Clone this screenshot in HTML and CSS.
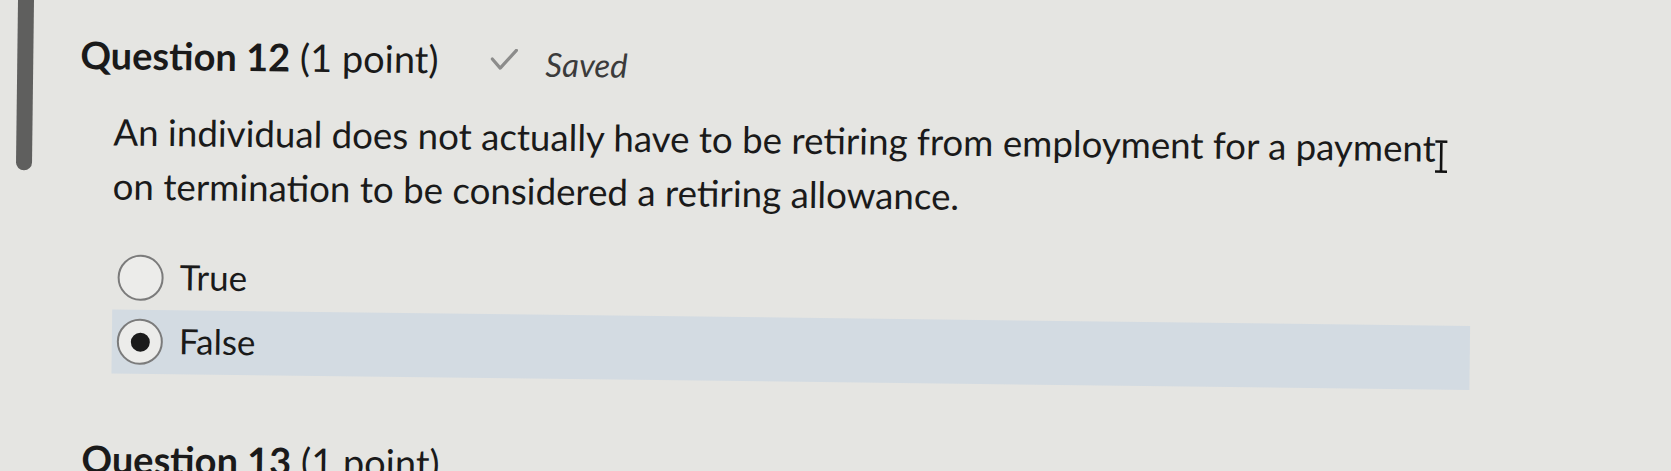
FILE: index.html
```html
<!DOCTYPE html>
<html lang="en">
<head>
  <meta charset="UTF-8" />
  <meta name="viewport" content="width=device-width, initial-scale=1" />
  <title>Quiz - Question 12</title>
  <link rel="stylesheet" href="styles.css">
</head>
<body>

  <div class="page">
    <div class="rail"></div>

    <div class="quiz">
      <div class="question">
        <div class="q-head">
          <h2><strong>Question 12</strong> (1 point)</h2>
          <span class="saved">
            <svg width="28" height="22" viewBox="0 0 28 22" aria-hidden="true">
              <path d="M2 11 L10 20 L26 2" fill="none" stroke="#8c8c8b" stroke-width="3.2" stroke-linecap="round" stroke-linejoin="round" />
            </svg>
            Saved
          </span>
        </div>

        <p class="q-text">An individual does not actually have to be retiring from employment for a payment<span class="caret"><svg width="16" height="34" viewBox="0 0 16 34" aria-hidden="true"><path d="M2 2 H14 M8 2 V32 M2 32 H14" fill="none" stroke="#111" stroke-width="2.6" /></svg></span> on termination to be considered a retiring allowance.</p>

        <div class="options">
          <label class="option">
            <span class="radio"></span>
            <span class="opt-text">True</span>
          </label>
          <label class="option selected">
            <span class="radio"></span>
            <span class="opt-text">False</span>
          </label>
        </div>
      </div>

      <div class="question next">
        <div class="q-head">
          <h2><strong>Question 13</strong> (1 point)</h2>
        </div>
      </div>
    </div>
  </div>

</body>
</html>
```

FILE: styles.css
```css
/* Base */
body {
  margin: 0;
  background: #e5e5e2;
  color: #1a1a1a;
  font-family: Lato, "Open Sans", sans-serif;
  overflow: hidden;
}

.page {
  display: flex;
  align-items: flex-start;
  transform: rotate(0.7deg);
  transform-origin: 0 0;
}

/* scroll marker on the left edge */
.rail {
  flex: none;
  width: 16px;
  height: 174px;
  margin-left: 18px;
  margin-top: -4px;
  background: #5f5f5e;
  border-radius: 0 0 8px 8px;
}

.quiz {
  margin-left: 47px;
}

.q-head {
  display: flex;
  align-items: baseline;
  gap: 52px;
}

h2 {
  margin: 30px 0 0 0;
  font-size: 38px;
  line-height: 46px;
  font-weight: 400;
  white-space: nowrap;
}

h2 strong {
  font-weight: 700;
}

.saved {
  display: flex;
  align-items: center;
  gap: 27px;
  font-size: 33px;
  font-style: italic;
  color: #3b3b3b;
}

.saved svg {
  position: relative;
  top: -4px;
}

.q-text {
  width: 1362px;
  margin: 26px 0 0 34px;
  font-size: 36.7px;
  line-height: 54px;
}

/* mouse cursor resting after "payment" */
.caret {
  position: relative;
}

.caret svg {
  position: absolute;
  left: -3px;
  top: 14px;
}

.options {
  width: 1358px;
  margin: 33px 0 0 35px;
}

.option {
  display: flex;
  align-items: center;
  gap: 16px;
  height: 64px;
  padding-left: 5px;
}

.option.selected {
  background: #d3dbe2;
}

.radio {
  position: relative;
  box-sizing: border-box;
  width: 46px;
  height: 46px;
  border: 2px solid #7b7b7b;
  border-radius: 50%;
  background: #ececea;
}

.option.selected .radio::after {
  content: "";
  position: absolute;
  left: 50%;
  top: 50%;
  width: 19px;
  height: 19px;
  margin: -9.5px 0 0 -9.5px;
  border-radius: 50%;
  background: #1b1b1b;
}

.opt-text {
  font-size: 35px;
  position: relative;
  top: -2px;
}

.next {
  margin-left: 6px;
}

.next h2 {
  margin-top: 62px;
}
```
